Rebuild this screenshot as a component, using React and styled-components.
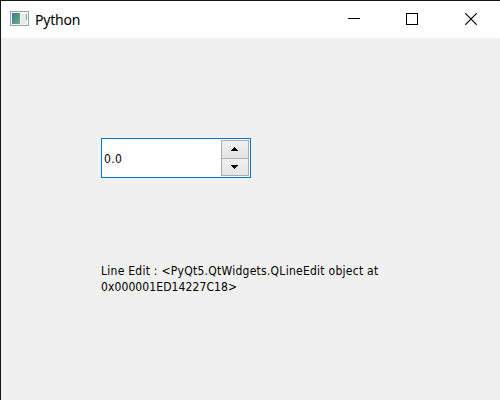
import React from "react";
import styled, { createGlobalStyle } from "styled-components";

const GlobalStyle = createGlobalStyle`
  * { box-sizing: border-box; }
  body { margin: 0; overflow: hidden; }
`;

const Window = styled.div`
  display: flex;
  flex-direction: column;
  width: 500px;
  height: 400px;
  background: #f0f0f0;
  border-top: 1px solid #18151a;
  border-left: 1px solid #18151a;
  color: #000;
`;

const TitleBar = styled.header`
  display: flex;
  height: 37px;
  flex: none;
  background: #fff;
`;

const AppIcon = styled.svg`
  display: block;
  margin: 10px 0 0 9px;
  width: 19px;
  height: 15px;
`;

const Title = styled.h1`
  flex: 1;
  margin: 0 0 0 6px;
  font: 400 14px/37px "Noto Sans", sans-serif;
  letter-spacing: -0.2px;
`;

const CaptionButton = styled.button`
  display: flex;
  width: 58px;
  padding: 12px 0 0 ${(p) => p.$inset}px;
  border: 0;
  background: transparent;

  svg { display: block; }
`;

const Content = styled.main`
  display: flex;
  flex-direction: column;
  padding: 100px 0 0 100px;
`;

const SpinBox = styled.div`
  display: flex;
  width: 150px;
  height: 40px;
  padding: 1px;
  border: 1px solid #0078d7;
  background: #fff;
`;

const Value = styled.span`
  flex: 1;
  padding-left: 1px;
  font: 12px/38px "DejaVu Sans Condensed", "DejaVu Sans", sans-serif;
  font-stretch: condensed;
  letter-spacing: 0.3px;
`;

const Steppers = styled.div`
  display: flex;
  flex-direction: column;
  width: 28px;
  border: 1px solid #acacac;
`;

const StepButton = styled.button`
  display: flex;
  align-items: flex-start;
  flex: none;
  height: 17px;
  padding: 6px 0 0 9px;
  border: 0;
  background: linear-gradient(#f0f0f0, #e5e5e5);

  & + & {
    border-top: 1px solid #acacac;
  }

  svg { display: block; }
`;

const Label = styled.p`
  margin: 85px 0 0;
  width: 300px;
  font: 12px/16px "DejaVu Sans Condensed", "DejaVu Sans", sans-serif;
  font-stretch: condensed;
`;

const Line = styled.span`
  display: block;
  white-space: nowrap;
  letter-spacing: ${(p) => p.$spacing}px;
`;

export default function App() {
  return (
    <>
      <GlobalStyle />
      <Window>
        <TitleBar>
          <AppIcon viewBox="0 0 19 15" shapeRendering="crispEdges">
            <defs>
              <linearGradient id="screen" x1="0" y1="0" x2="1" y2="1">
                <stop offset="0" stopColor="#3f7798" />
                <stop offset="1" stopColor="#63b283" />
              </linearGradient>
            </defs>
            <rect x=".5" y=".5" width="18" height="14" fill="#f4f5f5" stroke="#9da3a7" />
            <rect x="2" y="2" width="8" height="11" fill="url(#screen)" />
            <rect x="11" y="3" width="5" height="10" fill="#e6e9ea" />
            <rect x="16" y="3" width="1" height="6" fill="#6fae9b" />
          </AppIcon>
          <Title>Python</Title>
          <CaptionButton $inset={22} aria-label="Minimize">
            <svg width="12" height="12" shapeRendering="crispEdges">
              <path d="M0 5.5H12" stroke="#000" />
            </svg>
          </CaptionButton>
          <CaptionButton $inset={22} aria-label="Maximize">
            <svg width="12" height="12" shapeRendering="crispEdges">
              <rect x=".5" y=".5" width="11" height="11" fill="none" stroke="#000" />
            </svg>
          </CaptionButton>
          <CaptionButton $inset={23} aria-label="Close">
            <svg width="12" height="12">
              <path d="M.2 .2L11.8 11.8M11.8 .2L.2 11.8" stroke="#000" strokeWidth="1.15" />
            </svg>
          </CaptionButton>
        </TitleBar>
        <Content>
          <SpinBox>
            <Value>0.0</Value>
            <Steppers>
              <StepButton aria-label="Increase">
                <svg width="7" height="4" shapeRendering="crispEdges">
                  <path d="M3 0h1v1h1v1h1v1h1v1H0V3h1V2h1V1h1z" />
                </svg>
              </StepButton>
              <StepButton aria-label="Decrease">
                <svg width="7" height="4" shapeRendering="crispEdges">
                  <path d="M0 0h7v1H6v1H5v1H4v1H3V3H2V2H1V1H0z" />
                </svg>
              </StepButton>
            </Steppers>
          </SpinBox>
          <Label>
            <Line $spacing={0.26}>Line Edit : &lt;PyQt5.QtWidgets.QLineEdit object at</Line>
            <Line $spacing={0.1}>0x000001ED14227C18&gt;</Line>
          </Label>
        </Content>
      </Window>
    </>
  );
}
